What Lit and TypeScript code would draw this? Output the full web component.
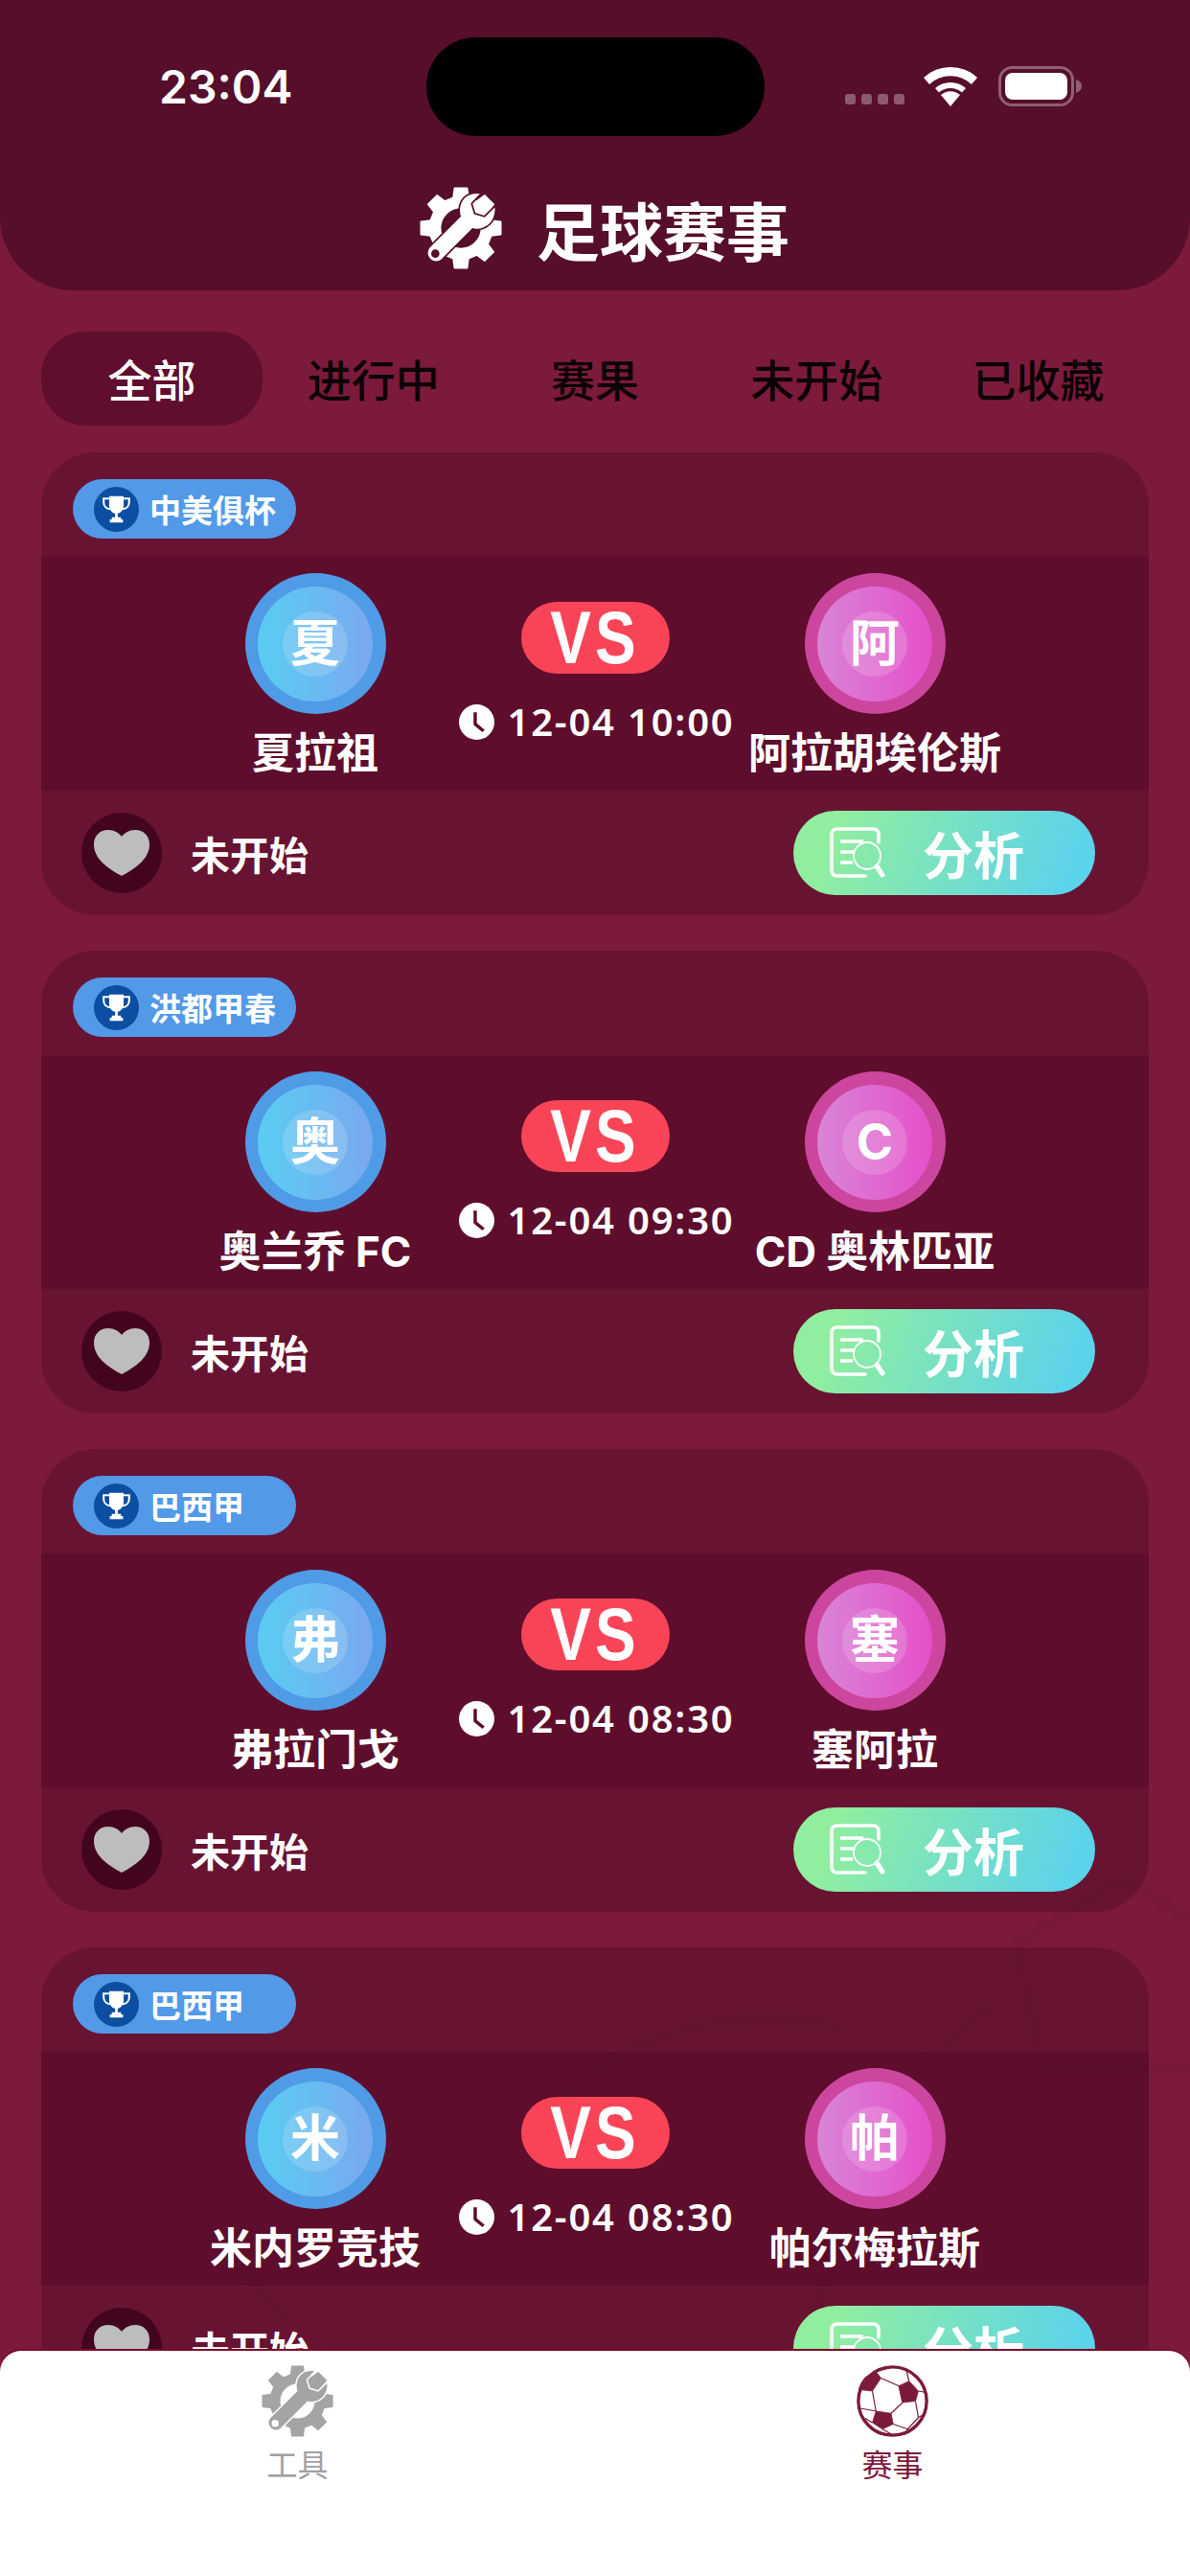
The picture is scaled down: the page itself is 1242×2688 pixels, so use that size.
import { LitElement, html, css } from "lit";
import { customElement } from "lit/decorators.js";

const pt = (r: number, deg: number) => {
  const a = (deg * Math.PI) / 180;
  return `${(50 + r * Math.cos(a)).toFixed(2)} ${(50 + r * Math.sin(a)).toFixed(2)}`;
};
const gearPath = (() => {
  const parts: string[] = [];
  for (let i = 0; i < 8; i++) {
    const a = i * 45 - 90;
    parts.push(pt(38, a - 14), pt(49, a - 9), pt(49, a + 9), pt(38, a + 14));
  }
  return `M${parts.join(" L")} Z M25 50 A25 25 0 1 0 75 50 A25 25 0 1 0 25 50 Z`;
})();

const gearIcon = (color: string, bg: string) => html`<svg viewBox="0 0 100 100" width="100%" height="100%">
  <path d=${gearPath} fill=${color} fill-rule="evenodd" stroke=${color} stroke-width="2" stroke-linejoin="round"/>
  <path d="M12 74 L50 36 C47 26 50 16 58 11 C62 8.5 68 7.5 73 8.5 L62 20 L66 33 L79 37 L91 25 C92 31 90 38 86 43 C80 50 71 52 64 50 L26 88 A10 10 0 0 1 12 74 Z"
    fill=${color} stroke=${bg} stroke-width="4" paint-order="stroke" stroke-linejoin="round"/>
  <circle cx="19" cy="81" r="5" fill=${bg}/>
</svg>`;

const ballIcon = html`<svg viewBox="0 0 100 100" width="100%" height="100%" fill="#7c1a3c" stroke="#7c1a3c" stroke-linejoin="round">
  <circle cx="50" cy="50" r="47.5" fill="none" stroke-width="4.5"/>
  <path stroke-width="1" d="M59 29 L73 22 L86 36 L82 50 L64 52 Z"/>
  <path stroke-width="1" d="M27 64 L48 67 L51 82 L36 89 L22 80 Z"/>
  <path stroke-width="1" d="M12 17 L27 9 L34 18 L22 36 L3 34 Q5 25 12 17 Z"/>
  <path fill="none" stroke-width="1.6" d="M34 18 L59 29 M59 29 L64 52 M64 52 L48 67 M27 64 L22 36 M73 22 L69 6 M86 36 L97 38 M82 50 L86 73 L71 89 L51 82 M86 73 L94 68 M71 89 L67 96 M36 89 L50 97 M22 80 L12 74 M27 64 L5 60 M27 9 L50 3"/>
</svg>`;

const trophy = html`<svg viewBox="0 0 24 24" width="33" height="33" fill="#fff">
  <path d="M6.5 2 H17.5 V9 C17.5 12.5 15.2 14.6 13 15 V18 H15.5 V19.6 H17 V22 H7 V19.6 H8.5 V18 H11 V15 C8.8 14.6 6.5 12.5 6.5 9 Z"/>
  <path fill="none" stroke="#fff" stroke-width="1.5" d="M6.5 3.8 H2.3 V6.5 C2.3 9.5 4.5 11.5 7.4 11.8 M17.5 3.8 H21.7 V6.5 C21.7 9.5 19.5 11.5 16.6 11.8"/>
</svg>`;

const clock = html`<svg viewBox="0 0 36 36" width="37" height="37">
  <circle cx="18" cy="18" r="18" fill="#fff"/>
  <path d="M16.5 8 V20 L25 27" fill="none" stroke="#5f0e2e" stroke-width="3.4" stroke-linejoin="round"/>
</svg>`;

const heart = html`<svg viewBox="0 0 58 48" width="58" height="48">
  <path d="M29 48 C14 40 0 30 0 15 C0 6 6.5 0 15 0 C21 0 26 3 29 7 C32 3 37 0 43 0 C51.5 0 58 6 58 15 C58 30 44 40 29 48 Z" fill="#bdbdbd"/>
</svg>`;

const reportIcon = html`<svg viewBox="0 0 60 56" width="60" height="56" fill="none" stroke="#fff">
  <path d="M38 52 H9 Q3 52 3 46 V9 Q3 3 9 3 H46 Q52 3 52 9 V17" stroke-width="3.6" stroke-linecap="round"/>
  <path d="M12 16 H36 M12 27 H27 M12 38 H25" stroke-width="3.4"/>
  <circle cx="40" cy="31" r="14" stroke-width="1.8"/>
  <path d="M50 42 L56 51" stroke-width="5" stroke-linecap="round"/>
</svg>`;

const matches = [
  { league: "中美俱杯", l: "夏", lName: "夏拉祖", r: "阿", rName: "阿拉胡埃伦斯", time: "12-04 10:00" },
  { league: "洪都甲春", l: "奥", lName: "奥兰乔 FC", r: "C", rName: "CD 奥林匹亚", time: "12-04 09:30" },
  { league: "巴西甲", l: "弗", lName: "弗拉门戈", r: "塞", rName: "塞阿拉", time: "12-04 08:30" },
  { league: "巴西甲", l: "米", lName: "米内罗竞技", r: "帕", rName: "帕尔梅拉斯", time: "12-04 08:30" },
];
const tabs = ["全部", "进行中", "赛果", "未开始", "已收藏"];

@customElement("app-root")
export class AppRoot extends LitElement {
  static styles = css`
    :host {
      display: flex;
      flex-direction: column;
      position: relative;
      width: 1242px;
      height: 2688px;
      overflow: hidden;
      background: #7c1a3c;
      color: #fff;
      font-family: "Noto Sans CJK SC", "Noto Sans", sans-serif;
    }
    .watermark { position: absolute; left: 0; top: 1900px; width: 1242px; height: 560px; }
    .header {
      position: relative;
      flex: none;
      height: 303px;
      background: #560e2a;
      border-radius: 0 0 76px 76px;
    }
    .status { display: flex; align-items: flex-start; padding-top: 39px; }
    .clock-text {
      width: 279px;
      margin-left: 166px;
      margin-top: 24px;
      font: 600 48px/56px Inter, sans-serif;
    }
    .island { width: 353px; height: 103px; border-radius: 52px; background: #000; }
    .sys { display: flex; align-items: flex-end; margin-left: 84px; margin-top: 30px; height: 42px; }
    .dots { display: flex; gap: 6px; margin-bottom: 2px; }
    .dots i { width: 11px; height: 11px; border-radius: 3px; background: #8a5a70; }
    .wifi { margin-left: 20px; }
    .battery { margin-left: 22px; }
    .title { display: flex; align-items: center; justify-content: center; gap: 36px; margin-top: 53px; padding-left: 20px; }
    .title .gear { width: 86px; height: 86px; }
    .title span { font-size: 66px; font-weight: 700; line-height: 84px; }
    .tabs { flex: none; display: flex; margin: 43px 43px 0; height: 98px; }
    .tab {
      flex: 1;
      display: flex;
      align-items: center;
      justify-content: center;
      padding-bottom: 2px;
      box-sizing: border-box;
      font-size: 46px;
      font-weight: 500;
      color: #0b0205;
      border-radius: 46px;
    }
    .tab.on { background: #5f0e2e; color: #fff; }
    .list {
      position: relative;
      flex: 1;
      min-height: 0;
      overflow: hidden;
      display: flex;
      flex-direction: column;
      gap: 37px;
      padding: 28px 43px 0;
    }
    .card {
      flex: none;
      height: 483px;
      border-radius: 56px;
      background: rgba(64, 3, 30, 0.3);
      overflow: hidden;
      display: flex;
      flex-direction: column;
    }
    .card-head { height: 109px; padding: 28px 33px 0; box-sizing: border-box; }
    .pill {
      width: 233px;
      height: 62px;
      box-sizing: border-box;
      padding-left: 22px;
      border-radius: 31px;
      background: #5299e8;
      display: flex;
      align-items: center;
      gap: 11px;
    }
    .cup {
      width: 47px;
      height: 47px;
      border-radius: 50%;
      background: #0b4ea2;
      display: flex;
      align-items: center;
      justify-content: center;
    }
    .pill span { font-size: 33px; font-weight: 700; line-height: 40px; }
    .versus {
      height: 244px;
      display: grid;
      grid-template-columns: repeat(3, 292px);
      padding: 0 140px;
      background: rgba(69, 2, 34, 0.3);
    }
    .team { display: flex; flex-direction: column; align-items: center; padding-top: 17px; }
    .avatar {
      width: 147px;
      height: 147px;
      border-radius: 50%;
      display: flex;
      align-items: center;
      justify-content: center;
    }
    .blue { background: #4f9be6; }
    .pink { background: #cc469f; }
    .mid { width: 120px; height: 120px; border-radius: 50%; display: flex; align-items: center; justify-content: center; }
    .blue .mid { background: linear-gradient(90deg, #59cdf3, #7aa8ef); }
    .pink .mid { background: linear-gradient(90deg, #d985d6, #e64fca); }
    .core {
      width: 68px;
      height: 68px;
      border-radius: 50%;
      background: rgba(255, 255, 255, 0.16);
      display: flex;
      align-items: center;
      justify-content: center;
      font-family: Inter, "Noto Sans CJK SC", sans-serif;
      font-size: 52px;
      font-weight: 700;
      line-height: 68px;
    }
    .name {
      margin-top: 10px;
      font-family: Inter, "Noto Sans CJK SC", sans-serif;
      font-size: 44px;
      font-weight: 700;
      line-height: 62px;
      white-space: nowrap;
    }
    .center { display: flex; flex-direction: column; align-items: center; padding-top: 47px; }
    .vs {
      width: 155px;
      height: 75px;
      border-radius: 38px;
      background: #f94457;
      display: flex;
      align-items: center;
      justify-content: center;
    }
    .vs span {
      display: block;
      font: 700 78px/75px "Liberation Sans", sans-serif;
      letter-spacing: 5px;
      transform: scaleX(0.82);
    }
    .when { display: flex; align-items: center; gap: 13px; margin-top: 20px; height: 60px; white-space: nowrap; padding-left: 4px; }
    .when svg { flex: none; }
    .when span { font: 600 40px/60px "Noto Sans", sans-serif; letter-spacing: 1.8px; }
    .foot {
      flex: 1;
      display: flex;
      align-items: center;
      padding: 0 56px 0 42px;
    }
    .fav {
      width: 84px;
      height: 84px;
      border-radius: 50%;
      background: #43051d;
      display: flex;
      align-items: center;
      justify-content: center;
    }
    .state { margin-left: 30px; font-size: 41px; font-weight: 700; }
    .go {
      margin-left: auto;
      width: 315px;
      height: 88px;
      box-sizing: border-box;
      padding-left: 37px;
      border-radius: 44px;
      background: linear-gradient(110deg, #90ee9f 14%, #5cd3ea 90%);
      display: flex;
      align-items: center;
      gap: 38px;
    }
    .go span { font-size: 53px; font-weight: 700; line-height: 60px; }
    .bar {
      position: relative;
      flex: none;
      height: 235px;
      display: grid;
      grid-template-columns: 1fr 1fr;
      background: #fff;
      border-radius: 22px 22px 0 0;
      box-shadow: 0 -2px 0 #7a0c28;
    }
    .bar-item { display: flex; flex-direction: column; align-items: center; padding-top: 15px; font-size: 32px; line-height: 46px; }
    .bar-item div { width: 75px; height: 75px; margin-bottom: 4px; }
    .gray { color: #a0a0a0; }
    .wine { color: #7c1a3c; }
  `;

  render() {
    return html`
      <svg class="watermark" viewBox="0 0 1242 560" fill="none" stroke="#000" stroke-opacity="0.03" stroke-width="14">
        <path d="M1060 130 L1170 60 L1290 130 L1260 260 L1090 260 Z"/>
        <path d="M840 560 C880 380 940 250 1040 190 M560 320 C640 220 760 190 880 215 M190 400 L300 520"/>
      </svg>
      <div class="header">
        <div class="status">
          <div class="clock-text">23:04</div>
          <div class="island"></div>
          <div class="sys">
            <div class="dots"><i></i><i></i><i></i><i></i></div>
            <svg class="wifi" viewBox="0 0 56 42" width="56" height="42" fill="#fff">
              <path d="M28 42 L18 30 A15 15 0 0 1 38 30 Z"/>
              <path d="M12 23 A24 24 0 0 1 44 23 L40 27.5 A18 18 0 0 0 16 27.5 Z"/>
              <path d="M0 12 A41 41 0 0 1 56 12 L50 19 A32 32 0 0 0 6 19 Z"/>
            </svg>
            <svg class="battery" viewBox="0 0 88 42" width="88" height="42">
              <rect x="1.5" y="1.5" width="76" height="39" rx="13" fill="none" stroke="#8f5f76" stroke-width="3"/>
              <rect x="7" y="7" width="65" height="28" rx="8" fill="#fff"/>
              <path d="M81 14 Q87 16 87 21 Q87 26 81 28 Z" fill="#8f5f76"/>
            </svg>
          </div>
        </div>
        <div class="title">
          <div class="gear">${gearIcon("#fff", "#560e2a")}</div>
          <span>足球赛事</span>
        </div>
      </div>
      <div class="tabs">
        ${tabs.map((t, i) => html`<div class="tab ${i === 0 ? "on" : ""}">${t}</div>`)}
      </div>
      <div class="list">
        ${matches.map(
          (m) => html`<div class="card">
            <div class="card-head">
              <div class="pill"><div class="cup">${trophy}</div><span>${m.league}</span></div>
            </div>
            <div class="versus">
              <div class="team">
                <div class="avatar blue"><div class="mid"><div class="core">${m.l}</div></div></div>
                <div class="name">${m.lName}</div>
              </div>
              <div class="center">
                <div class="vs"><span>VS</span></div>
                <div class="when">${clock}<span>${m.time}</span></div>
              </div>
              <div class="team">
                <div class="avatar pink"><div class="mid"><div class="core">${m.r}</div></div></div>
                <div class="name">${m.rName}</div>
              </div>
            </div>
            <div class="foot">
              <div class="fav">${heart}</div>
              <div class="state">未开始</div>
              <div class="go">${reportIcon}<span>分析</span></div>
            </div>
          </div>`
        )}
      </div>
      <div class="bar">
        <div class="bar-item gray"><div>${gearIcon("#a4a4a4", "#fff")}</div>工具</div>
        <div class="bar-item wine"><div>${ballIcon}</div>赛事</div>
      </div>
    `;
  }
}
